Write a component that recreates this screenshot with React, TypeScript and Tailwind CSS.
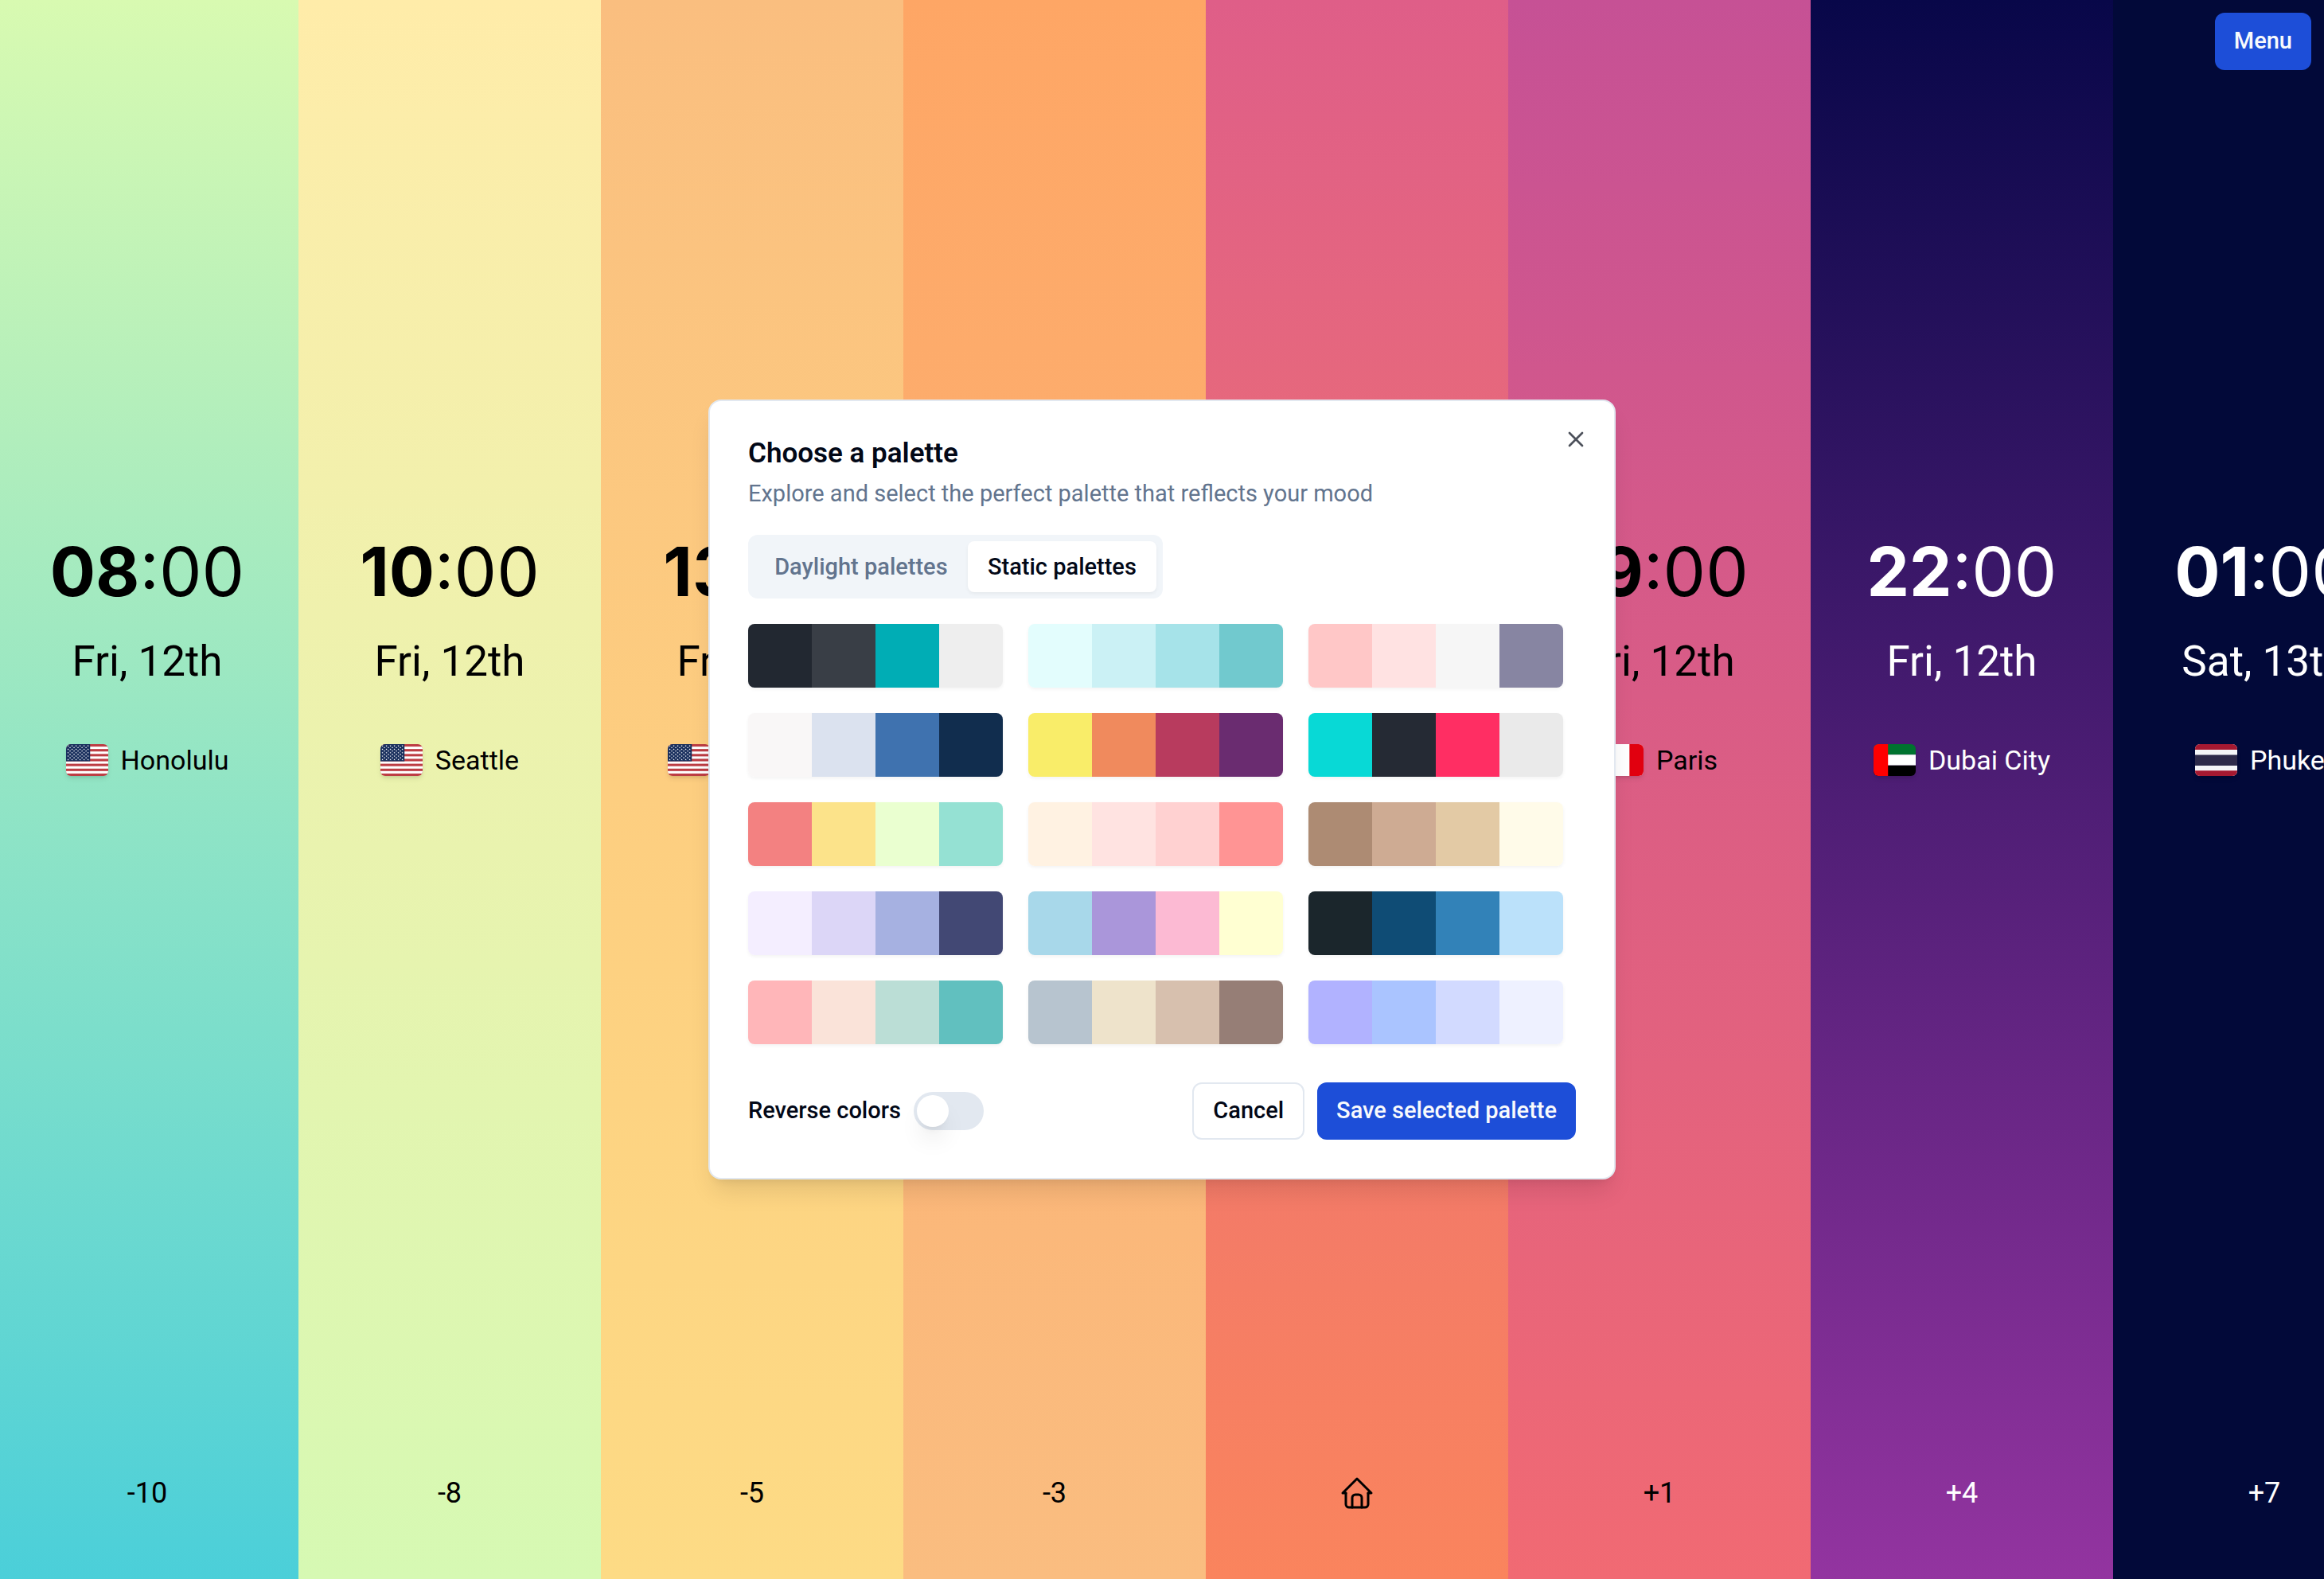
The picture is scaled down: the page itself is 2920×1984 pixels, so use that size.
import React, { useState } from "react";
import { X } from "lucide-react";

type FlagCode = "us" | "ar" | "pt" | "fr" | "ae" | "th";

interface Zone {
  hour: string;
  date: string;
  city: string;
  flag: FlagCode;
  offset: string | null;
  tone: string;
}

const ZONES: Zone[] = [
  { hour: "08", date: "Fri, 12th", city: "Honolulu", flag: "us", offset: "-10", tone: "from-[#d8fab1] to-[#4bcfd9] text-black" },
  { hour: "10", date: "Fri, 12th", city: "Seattle", flag: "us", offset: "-8", tone: "from-[#ffeca9] to-[#d6f9b3] text-black" },
  { hour: "13", date: "Fri, 12th", city: "New York", flag: "us", offset: "-5", tone: "from-[#fabe7f] via-[#fdce80] to-[#fddb85] text-black" },
  { hour: "15", date: "Fri, 12th", city: "Buenos Aires", flag: "ar", offset: "-3", tone: "from-[#fea665] to-[#fabd80] text-black" },
  { hour: "18", date: "Fri, 12th", city: "Lisbon", flag: "pt", offset: null, tone: "from-[#df5e88] to-[#fa845d] text-black" },
  { hour: "19", date: "Fri, 12th", city: "Paris", flag: "fr", offset: "+1", tone: "from-[#c65195] to-[#f16a73] text-black" },
  { hour: "22", date: "Fri, 12th", city: "Dubai City", flag: "ae", offset: "+4", tone: "from-[#080749] to-[#9334a0] text-white" },
  { hour: "01", date: "Sat, 13th", city: "Phuket", flag: "th", offset: "+7", tone: "from-[#020939] to-[#020939] text-white" },
];

const PALETTES: string[][] = [
  ["bg-[#222831]", "bg-[#393e46]", "bg-[#00adb5]", "bg-[#eeeeee]"],
  ["bg-[#e3fdfd]", "bg-[#cbf1f5]", "bg-[#a6e3e9]", "bg-[#71c9ce]"],
  ["bg-[#ffc7c7]", "bg-[#ffe2e2]", "bg-[#f6f6f6]", "bg-[#8785a2]"],
  ["bg-[#f9f7f7]", "bg-[#dbe2ef]", "bg-[#3f72af]", "bg-[#112d4e]"],
  ["bg-[#f9ed69]", "bg-[#f08a5d]", "bg-[#b83b5e]", "bg-[#6a2c70]"],
  ["bg-[#08d9d6]", "bg-[#252a34]", "bg-[#ff2e63]", "bg-[#eaeaea]"],
  ["bg-[#f38181]", "bg-[#fce38a]", "bg-[#eaffd0]", "bg-[#95e1d3]"],
  ["bg-[#fff2e2]", "bg-[#ffe3e1]", "bg-[#ffd1d1]", "bg-[#ff9494]"],
  ["bg-[#ad8b73]", "bg-[#ceab93]", "bg-[#e3caa5]", "bg-[#fffbe9]"],
  ["bg-[#f4eeff]", "bg-[#dcd6f7]", "bg-[#a6b1e1]", "bg-[#424874]"],
  ["bg-[#a8d8ea]", "bg-[#aa96da]", "bg-[#fcbad3]", "bg-[#ffffd2]"],
  ["bg-[#1b262c]", "bg-[#0f4c75]", "bg-[#3282b8]", "bg-[#bbe1fa]"],
  ["bg-[#ffb6b9]", "bg-[#fae3d9]", "bg-[#bbded6]", "bg-[#61c0bf]"],
  ["bg-[#b7c4cf]", "bg-[#eee3cb]", "bg-[#d7c0ae]", "bg-[#967e76]"],
  ["bg-[#b1b2ff]", "bg-[#aac4ff]", "bg-[#d2daff]", "bg-[#eef1ff]"],
];

const STAR = "M0-15 3.4-4.7H14.3L5.5 1.8 8.8 12.1 0 5.8-8.8 12.1-5.5 1.8-14.3-4.7H-3.4Z";

function UsFlag() {
  const stripe = 480 / 13;
  const stars: React.ReactNode[] = [];
  for (let row = 0; row < 9; row++) {
    const count = row % 2 === 0 ? 6 : 5;
    const start = row % 2 === 0 ? 31 : 61;
    for (let i = 0; i < count; i++) {
      stars.push(<path key={`${row}-${i}`} d={STAR} transform={`translate(${start + i * 60.5} ${26 + row * 25.8})`} />);
    }
  }
  return (
    <>
      <path fill="#bd3d44" d="M0 0h640v480H0z" />
      {[1, 3, 5, 7, 9, 11].map((i) => (
        <rect key={i} y={i * stripe} width="640" height={stripe} fill="#fff" />
      ))}
      <rect width="365" height={stripe * 7} fill="#192f5d" />
      <g fill="#fff">{stars}</g>
    </>
  );
}

function Flag({ code }: { code: FlagCode }) {
  return (
    <svg viewBox="0 0 640 480" preserveAspectRatio="none" aria-hidden="true" className="h-10 w-[53px] rounded-md shadow-md">
      {code === "us" && <UsFlag />}
      {code === "ar" && (
        <>
          <path fill="#74acdf" d="M0 0h640v480H0z" />
          <path fill="#fff" d="M0 160h640v160H0z" />
          <circle cx="320" cy="240" r="40" fill="#f6b40e" />
        </>
      )}
      {code === "pt" && (
        <>
          <path fill="red" d="M256 0h384v480H256z" />
          <path fill="#060" d="M0 0h256v480H0z" />
          <circle cx="256" cy="240" r="90" fill="#ff0" />
        </>
      )}
      {code === "fr" && (
        <>
          <path fill="#fff" d="M0 0h640v480H0z" />
          <path fill="#000091" d="M0 0h213.3v480H0z" />
          <path fill="#e1000f" d="M426.7 0H640v480H426.7z" />
        </>
      )}
      {code === "ae" && (
        <>
          <path fill="#00732f" d="M0 0h640v160H0z" />
          <path fill="#fff" d="M0 160h640v160H0z" />
          <path fill="#000" d="M0 320h640v160H0z" />
          <path fill="red" d="M0 0h220v480H0z" />
        </>
      )}
      {code === "th" && (
        <>
          <path fill="#f4f5f8" d="M0 0h640v480H0z" />
          <path fill="#2d2a4a" d="M0 162.5h640v160H0z" />
          <path fill="#a51931" d="M0 0h640v82.5H0zM0 400h640v80H0z" />
        </>
      )}
    </svg>
  );
}

function HomeIcon() {
  return (
    <svg viewBox="0 0 24 24" fill="none" stroke="currentColor" strokeWidth="1.5" strokeLinecap="round" strokeLinejoin="round" role="img" aria-label="Home" className="size-12">
      <path d="M5 12H3l9-9 9 9h-2" />
      <path d="M5 12v7a2 2 0 0 0 2 2h10a2 2 0 0 0 2-2v-7" />
      <path d="M9 21v-6a2 2 0 0 1 2-2h2a2 2 0 0 1 2 2v6" />
    </svg>
  );
}

function ZoneColumn({ zone }: { zone: Zone }) {
  return (
    <section className={`flex w-[380px] shrink-0 flex-col items-center bg-linear-to-b/srgb ${zone.tone}`}>
      <div className="flex flex-1 flex-col items-center justify-center">
        <p className="font-['Inter',sans-serif] text-[85px] leading-24">
          <span className="font-bold">{zone.hour}</span>:00
        </p>
        <p className="mt-8 text-[53px] leading-16">{zone.date}</p>
        <div className="mt-18 flex items-center gap-4">
          <Flag code={zone.flag} />
          <span className="text-[34px] leading-10 whitespace-nowrap">{zone.city}</span>
        </div>
      </div>
      <div className="flex h-[338px] items-end pb-21 text-4xl leading-12">
        {zone.offset === null ? <HomeIcon /> : <span className="leading-12">{zone.offset}</span>}
      </div>
    </section>
  );
}

function PaletteDialog() {
  const [tab, setTab] = useState("Static palettes");
  const [reversed, setReversed] = useState(false);
  return (
    <div
      role="dialog"
      aria-labelledby="palette-title"
      aria-describedby="palette-description"
      className="relative w-full max-w-[1140px] rounded-2xl border-2 border-slate-200 bg-white p-12 text-[29px] text-[#020817] shadow-[0_20px_30px_-6px_rgb(0_0_0/0.1),0_8px_12px_-8px_rgb(0_0_0/0.1)]"
    >
      <h2 id="palette-title" className="text-[35px] leading-9 font-semibold">Choose a palette</h2>
      <p id="palette-description" className="mt-3 leading-10 text-slate-500">
        Explore and select the perfect palette that reflects your mood
      </p>

      <div role="tablist" className="mt-8 flex h-20 w-[521px] items-center rounded-xl bg-slate-100 p-2 font-medium">
        {["Daylight palettes", "Static palettes"].map((name) => (
          <button
            key={name}
            type="button"
            role="tab"
            aria-selected={tab === name}
            onClick={() => setTab(name)}
            className={`h-16 grow rounded-lg px-5 leading-10 whitespace-nowrap ${
              tab === name ? "bg-white text-[#020817] shadow-[0_2px_4px_rgb(0_0_0/0.05)]" : "text-slate-500"
            }`}
          >
            {name}
          </button>
        ))}
      </div>

      <div className="mt-8 grid grid-cols-3 gap-8 pr-4">
        {PALETTES.map((colors, index) => (
          <button
            key={index}
            type="button"
            aria-label={`Palette ${index + 1}`}
            className={`flex h-20 overflow-hidden rounded-lg shadow-[0_2px_4px_rgb(0_0_0/0.05)] ${reversed ? "flex-row-reverse" : ""}`}
          >
            {colors.map((color) => (
              <span key={color} className={`h-full flex-1 ${color}`} />
            ))}
          </button>
        ))}
      </div>

      <div className="mt-12 flex items-center justify-between font-medium">
        <div className="flex items-center gap-4">
          <label htmlFor="reverse-colors">Reverse colors</label>
          <input
            id="reverse-colors"
            type="checkbox"
            role="switch"
            checked={reversed}
            onChange={() => setReversed(!reversed)}
            className="flex h-12 w-22 cursor-pointer appearance-none rounded-full bg-slate-200 p-1 before:size-10 before:rounded-full before:bg-white before:shadow-[0_20px_30px_-6px_rgb(0_0_0/0.1),0_8px_12px_-8px_rgb(0_0_0/0.1)] checked:justify-end checked:bg-blue-700"
          />
        </div>
        <div className="flex gap-4">
          <button type="button" className="h-18 rounded-xl border-2 border-slate-200 bg-white px-6">Cancel</button>
          <button type="button" className="h-18 rounded-xl bg-[#1d4ed8] px-6 text-slate-50">Save selected palette</button>
        </div>
      </div>

      <button type="button" aria-label="Close" className="absolute top-8 right-8 opacity-70">
        <X className="size-8" />
      </button>
    </div>
  );
}

export default function App() {
  return (
    <div className="relative h-screen overflow-hidden font-['Roboto',sans-serif]">
      <main className="-ml-[5px] flex h-full">
        {ZONES.map((zone) => (
          <ZoneColumn key={zone.city} zone={zone} />
        ))}
      </main>
      <button type="button" className="absolute top-4 right-4 h-18 rounded-xl bg-[#1d4ed8] px-6 text-[29px] font-medium text-slate-50">
        Menu
      </button>
      <div className="absolute inset-0 flex items-center justify-center">
        <PaletteDialog />
      </div>
    </div>
  );
}
